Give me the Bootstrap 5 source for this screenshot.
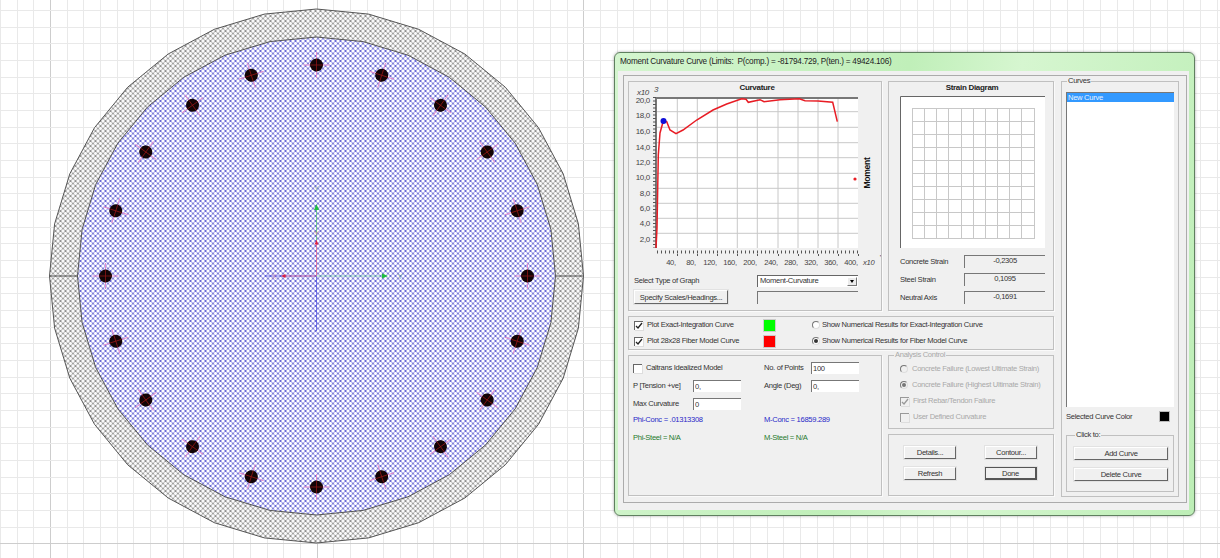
<!DOCTYPE html>
<html lang="en">
<head>
<meta charset="UTF-8">
<title>Moment Curvature Curve</title>
<link href="https://cdn.jsdelivr.net/npm/bootstrap@5.3.0/dist/css/bootstrap.min.css" rel="stylesheet">
<style>
    body { margin: 0; width: 1220px; height: 558px; overflow: hidden; background: #fff; position: relative;
        font-family: "Liberation Sans", Arial, sans-serif; font-size: 7.6px; letter-spacing: -.3px; line-height: 10px; color: #333; }
    #section { position: absolute; left: 0; top: 0; }
    svg text { font-family: "Liberation Sans", Arial, sans-serif; letter-spacing: -.3px; }
    .mc-axes { opacity: .6; }

    .mc-window { position: absolute; left: 614px; top: 52px; width: 581px; height: 464px; padding: 0 5px 5px 3px;
        border: 1px solid #5f7f5f; border-radius: 6px; box-shadow: 0 0 3px rgba(0,0,0,.35);
        background: linear-gradient(100deg, #d4f5cf 0%, #c0efb9 45%, #d6f6d0 62%, #bdeeb6 100%); }
    .mc-title { height: 18px; line-height: 18px; padding-left: 2px; font-size: 8.2px; letter-spacing: -.23px; color: #222; white-space: nowrap; }
    .mc-client { height: 439px; background: #f0f0f0; padding: 4px 2px 7px 5px; }
    .mc-frame { height: 100%; border: 1px solid #ababab; padding: 5px 5px 5px 4px; }
    .mc-left { width: 426px; }
    .mc-panel { border: 1px solid #c0c0c0; box-shadow: 1px 1px 0 #fafafa; background: #f0f0f0; }
    .mc-curv { width: 254px; height: 230px; }
    .mc-strain { width: 166px; height: 230px; }
    .mc-opts { height: 35px; padding: 0 5px; }
    .mc-model { width: 254px; height: 141px; padding: 6px 4px 0; }
    .mc-actions { height: 62px; padding: 11px 0 0 15px; }
    svg.mc-block { display: block; }

    fieldset.mc-group { border: 1px solid #c0c0c0; margin: 0; padding: 0; min-width: 0; }
    legend.mc-legend { float: none; width: auto; font-size: 7.6px; line-height: 10px; margin: 0 0 0 1px; padding: 0 1px; color: #333; }
    .mc-analysis { height: 79px; margin-top: -5px !important; padding: 1px 0 0 11px !important; color: #a8a8a8; }
    .mc-analysis legend.mc-legend { color: #a8a8a8; margin-left: -6px; }
    .mc-curves { width: 118px; height: 421px; margin-top: -5px !important; padding: 6px 4px 0 !important; }
    .mc-clickto { height: 62px; margin-top: 8px !important; padding: 7px 0 0 7px !important; }

    .mc-list { height: 315px; background: #fff; border-top: 1px solid #777; border-left: 1px solid #777; }
    .mc-list div { height: 9px; line-height: 9px; background: #3399ff; color: #e8f3ff; padding-left: 1px; }
    .mc-swatch { display: block; width: 11px; height: 11px; border: 1px solid #bbb; }

    .mc-btn { display: block; height: 13px; padding: 0; font-size: 7.6px; letter-spacing: -.3px; line-height: 11px; color: #333; background: #f0f0f0; white-space: nowrap;
        border: 1px solid; border-color: #fff #666 #666 #fff; border-radius: 0; box-shadow: 0 0 0 1px #e2e2e2; }
    .mc-btn-default { border: 1px solid #555; border-right-width: 2px; border-bottom-width: 2px; }
    .mc-btn-tall { height: 14px; }
    .mc-input { display: block; width: 48px; height: 12px; min-height: 0; padding: 0 1px; font-size: 7.6px; letter-spacing: -.3px; line-height: 10px; color: #333;
        border: 0; border-top: 1px solid #777; border-left: 1px solid #777; border-radius: 0; background: #fff; box-shadow: none; }
    .mc-readout { width: 81px; height: 13px; line-height: 10px; text-align: center; border-top: 1px solid #777; border-left: 1px solid #777; }
    .mc-empty { width: 101px; height: 13px; border-top: 1px solid #777; border-left: 1px solid #777; }
    .mc-select { width: 101px; height: 12px; line-height: 10px; padding-left: 2px; background: #fff; border-top: 1px solid #666; border-left: 1px solid #666; }
    .mc-arrow { position: absolute; right: 1px; top: 1px; width: 10px; height: 9px; background: #ececec; border: 1px solid; border-color: #fff #777 #777 #fff; }
    .mc-arrow::after { content: ""; position: absolute; left: 2px; top: 2px; border: 2.5px solid transparent; border-top: 3px solid #000; border-bottom: 0; }

    .mc-box { display: block; flex: none; width: 9px; height: 9px; background: #fff; border-top: 1px solid #666; border-left: 1px solid #666; box-shadow: 1px 1px 0 #ddd; }
    .mc-radio { display: block; flex: none; width: 8px; height: 8px; border-radius: 50%; background: #fff; border: 1px solid; border-color: #777 #ddd #ddd #777; position: relative; }
    .mc-radio.on::after { content: ""; position: absolute; left: 1px; top: 1px; width: 4px; height: 4px; border-radius: 50%; background: #333; }
    .mc-analysis .mc-box { background: #f0f0f0; border-color: #999; }
    .mc-analysis .mc-radio { background: #f0f0f0; }
    .mc-analysis .mc-radio.on::after { background: #777; }
    .mc-check-row { height: 16px; }
    .mc-plot-lab { width: 117px; margin-left: 4px; }
    .mc-color { width: 11px; height: 11px; box-shadow: 0 0 0 1px #ccc; }
    .mc-show { margin-left: 37px; margin-right: 2px; }
    .mc-lab-p { width: 60px; }
    .mc-lab-n { width: 47px; }
    .mc-cell { width: 131px; }
    .mc-phi { color: #2828c8; }
    .mc-steel { color: #1e7a2c; }
    .mc-r1 { height: 12px; margin-top: 6px; }
    .mc-r0 { height: 12px; }
    .mc-r2 { height: 10px; margin-top: 5px; }
    .mc-r3 { height: 10px; margin-top: 8px; }
    .mc-w52 { width: 52px; }
    .mc-w94 { width: 94px; }
    .mc-col29 { column-gap: 29px; row-gap: 8px; display: grid; grid-template-columns: 52px 52px; }
    .mc-below { padding: 7px 0 0 5px; }
    .mc-below-lab { width: 123px; }
    .mc-below-2 { margin-top: 3px; }
    .mc-strain-rows { padding: 6px 7px 0 11px; row-gap: 5px; }
    .mc-strain-lab { width: 64px; }
    .mc-gap5 { gap: 5px; }
    .mc-gap6 { gap: 6px; }
    .mc-gap7 { gap: 7px; }
</style>
</head>
<body>
    <!-- drawing canvas: grid + column section -->
    <svg id="section" width="1220" height="558" viewBox="0 0 1220 558">
        <defs>
            <pattern id="hatchBlue" width="5" height="5" patternUnits="userSpaceOnUse" x="0.5" y="1">
                <rect width="5" height="5" fill="#fff"/>
                <path d="M0 0L5 5M5 0L0 5" stroke="#7c7cea" stroke-width=".85"/>
                <circle cx="2.5" cy="2.5" r=".65" fill="#1c1ca8"/>
                <circle cx="0" cy="0" r=".65" fill="#1c1ca8"/><circle cx="5" cy="0" r=".65" fill="#1c1ca8"/>
                <circle cx="0" cy="5" r=".65" fill="#1c1ca8"/><circle cx="5" cy="5" r=".65" fill="#1c1ca8"/>
            </pattern>
            <pattern id="hatchGrey" width="5" height="5" patternUnits="userSpaceOnUse" x="0.5" y="1">
                <rect width="5" height="5" fill="#fafafa"/>
                <path d="M0 0L5 5M5 0L0 5" stroke="#a0a0a0" stroke-width=".9"/>
                <circle cx="2.5" cy="2.5" r=".6" fill="#444"/>
                <circle cx="0" cy="0" r=".6" fill="#444"/><circle cx="5" cy="0" r=".6" fill="#444"/>
                <circle cx="0" cy="5" r=".6" fill="#444"/><circle cx="5" cy="5" r=".6" fill="#444"/>
            </pattern>
        </defs>
        <g id="gridLines"></g>
        <polygon id="outerPoly" fill="url(#hatchGrey)" stroke="#555" stroke-width="1"/>
        <polygon id="innerPoly" fill="url(#hatchBlue)" stroke="#555" stroke-width="1"/>
        <path d="M50 276H78M555 276H583" stroke="#555"/>
        <g id="bars"></g>
        <g class="mc-axes">
            <path d="M316.5 276V331M316.5 276H265" stroke="#3030e0"/>
            <path d="M316.5 276V240M316.5 276H283" stroke="#e84070"/>
            <path d="M316.5 240V205" stroke="#30c050"/>
            <path d="M316.5 276H386" stroke="#60d090"/>
            <text x="316.5" y="191" font-size="8" text-anchor="middle" fill="#60a080">Y</text>
            <text x="316.5" y="236" font-size="8" text-anchor="middle" fill="#c06060">Y</text>
            <text x="400" y="279" font-size="8" text-anchor="middle" fill="#50a070">Y</text>
            <text x="274" y="279" font-size="8" text-anchor="middle" fill="#c070a0">X</text>
        </g>
        <path d="M316.5 204l-2.500 6h5z" fill="#20c040"/>
        <path d="M316.5 240l-2 4.500h4z" fill="#e02040"/>
        <path d="M388 276l-6-2.500v5z" fill="#20c040"/>
        <path d="M281 276l4.500-2v4z" fill="#e02040"/>
    </svg>

    <div class="mc-window">
        <div class="mc-title">Moment Curvature Curve (Limits:&nbsp; P(comp.) = -81794.729, P(ten.) = 49424.106)</div>
        <div class="mc-client">
            <div class="mc-frame d-flex mc-gap7">
                <div class="mc-left d-flex flex-column mc-gap5">
                    <div class="d-flex mc-gap6">
                        <!-- curvature chart -->
                        <div class="mc-panel mc-curv">
                            <svg class="mc-block" width="252" height="186" viewBox="629 82 252 186">
                                <rect x="656" y="97" width="202" height="151" fill="#fff"/>
                                <text x="757" y="90" font-size="8" font-weight="bold" text-anchor="middle" fill="#222">Curvature</text>
                                <text x="637" y="95" font-size="8" font-style="italic" fill="#444">x10</text>
                                <text x="656" y="92" font-size="8" font-style="italic" text-anchor="middle" fill="#444">3</text>
                                <path d="M656 111.700H858M656 127.300H858M656 142.700H858M656 157.700H858M656 173.300H858M656 188.300H858M656 203.300H858M656 218.300H858M656 233.300H858" stroke="#c8c8c8"/>
                                <path d="M677.300 97V248M697.300 97V248M717.300 97V248M737.300 97V248M757.300 97V248M778 97V248M798 97V248M818 97V248M838 97V248" stroke="#c8c8c8"/>
                                <path d="M656 98H858M656 97V248" stroke="#777" stroke-width="2"/>
                                <path d="M654.500 97V248" stroke="#555" stroke-width="3" stroke-dasharray="1 2.500"/>
                                <path d="M657 252H858" stroke="#555" stroke-width="3" stroke-dasharray="1 3"/>
                                <path d="M677.500 254v2M697.500 254v2M717.500 254v2M737.500 254v2M757.500 254v2M778.500 254v2M798.500 254v2M818.500 254v2M838.500 254v2M858.500 254v2" stroke="#555"/>
                                <g font-size="8" fill="#444" text-anchor="end">
                                    <text x="650" y="103">20,0</text><text x="650" y="118">18,0</text><text x="650" y="134">16,0</text>
                                    <text x="650" y="150">14,0</text><text x="650" y="165">12,0</text><text x="650" y="180">10,0</text>
                                    <text x="650" y="196">8,0</text><text x="650" y="211">6,0</text><text x="650" y="226">4,0</text><text x="650" y="242">2,0</text>
                                </g>
                                <g font-size="7.600" fill="#444" text-anchor="middle">
                                    <text x="671" y="265">40,</text><text x="691" y="265">80,</text><text x="710" y="265">120,</text>
                                    <text x="730" y="265">160,</text><text x="750" y="265">200,</text><text x="771" y="265">240,</text>
                                    <text x="791" y="265">280,</text><text x="811" y="265">320,</text><text x="831" y="265">360,</text><text x="851" y="265">400,</text>
                                </g>
                                <text x="863" y="265" font-size="7.600" font-style="italic" fill="#444">x10</text>
                                <text x="881" y="260" font-size="8" text-anchor="end" fill="#444">'</text>
                                <text transform="translate(870 173) rotate(-90)" font-size="8.600" font-weight="bold" text-anchor="middle" fill="#111">Moment</text>
                                <polyline fill="none" stroke="#e81c24" stroke-width="1.500" points="656,248 657,228 658.300,155 660,133 663.300,121 666.700,121.700 670,130 676,133.700 683,130 696.700,120 713,110 726.700,104 741.700,98.700 746,99.300 748.300,102.300 760,99.700 764,101.700 780,99.700 799.300,98.700 805,100.700 818,101 832.700,102.300 837.300,121.700"/>
                                <circle cx="663.500" cy="121" r="3" fill="#1010d8"/>
                                <circle cx="855" cy="179" r="1.600" fill="#e81c24"/>
                            </svg>
                            <div class="mc-below">
                                <div class="d-flex align-items-center mc-r0">
                                    <div class="mc-below-lab">Select Type of Graph</div>
                                    <div class="mc-select position-relative">Moment-Curvature<span class="mc-arrow"></span></div>
                                </div>
                                <div class="d-flex align-items-center mc-below-2">
                                    <div class="mc-below-lab"><button type="button" class="btn mc-btn mc-btn-tall mc-w94">Specify Scales/Headings...</button></div>
                                    <div class="mc-empty"></div>
                                </div>
                            </div>
                        </div>
                        <!-- strain diagram -->
                        <div class="mc-panel mc-strain">
                            <svg class="mc-block" width="164" height="167" viewBox="889 82 164 167">
                                <text x="972" y="90" font-size="8" font-weight="bold" text-anchor="middle" fill="#222">Strain Diagram</text>
                                <rect x="900" y="96" width="145" height="152" fill="#fff"/>
                                <path d="M900.500 248V96.500H1045" fill="none" stroke="#666"/>
                                <path d="M912 108.500H1034M912 121.500H1034M912 134.500H1034M912 147.500H1034M912 160.500H1034M912 173.500H1034M912 186.500H1034M912 199.500H1034M912 212.500H1034M912 225.500H1034M912 238.500H1034" stroke="#c8c8c8"/>
                                <path d="M912.500 108V239M924.500 108V239M936.500 108V239M948.500 108V239M961.500 108V239M973.500 108V239M985.500 108V239M997.500 108V239M1009.500 108V239M1021.500 108V239M1034.500 108V239" stroke="#c8c8c8"/>
                            </svg>
                            <div class="mc-strain-rows d-flex flex-column">
                                <div class="d-flex align-items-center"><div class="mc-strain-lab">Concrete Strain</div><div class="mc-readout">-0,2305</div></div>
                                <div class="d-flex align-items-center"><div class="mc-strain-lab">Steel Strain</div><div class="mc-readout">0,1095</div></div>
                                <div class="d-flex align-items-center"><div class="mc-strain-lab">Neutral Axis</div><div class="mc-readout">-0,1691</div></div>
                            </div>
                        </div>
                    </div>

                    <!-- plot options -->
                    <div class="mc-panel mc-opts d-flex flex-column justify-content-center">
                        <div class="d-flex align-items-center mc-check-row">
                            <span class="mc-box"><svg width="8" height="8" viewBox="0 0 8 8" class="mc-block"><path d="M1 4l2 2 4-5" fill="none" stroke="#222" stroke-width="1.300"/></svg></span>
                            <span class="mc-plot-lab">Plot Exact-Integration Curve</span>
                            <span class="mc-color" style="background:#00ff00"></span>
                            <span class="mc-radio mc-show"></span>
                            <span>Show Numerical Results for Exact-Integration Curve</span>
                        </div>
                        <div class="d-flex align-items-center mc-check-row">
                            <span class="mc-box"><svg width="8" height="8" viewBox="0 0 8 8" class="mc-block"><path d="M1 4l2 2 4-5" fill="none" stroke="#222" stroke-width="1.300"/></svg></span>
                            <span class="mc-plot-lab">Plot 28x28 Fiber Model Curve</span>
                            <span class="mc-color" style="background:#ff0000"></span>
                            <span class="mc-radio mc-show on"></span>
                            <span>Show Numerical Results for Fiber Model Curve</span>
                        </div>
                    </div>

                    <div class="d-flex mc-gap6">
                        <!-- model inputs -->
                        <div class="mc-panel mc-model">
                            <div class="d-flex mc-r0">
                                <div class="mc-cell d-flex align-items-center"><span class="mc-box"></span><span class="ms-1">Caltrans Idealized Model</span></div>
                                <div class="d-flex align-items-center"><span class="mc-lab-n">No. of Points</span><input class="form-control mc-input" value="100"></div>
                            </div>
                            <div class="d-flex mc-r1">
                                <div class="mc-cell d-flex align-items-center"><span class="mc-lab-p">P [Tension +ve]</span><input class="form-control mc-input" value="0,"></div>
                                <div class="d-flex align-items-center"><span class="mc-lab-n">Angle (Deg)</span><input class="form-control mc-input" value="0,"></div>
                            </div>
                            <div class="d-flex mc-r1">
                                <div class="mc-cell d-flex align-items-center"><span class="mc-lab-p">Max Curvature</span><input class="form-control mc-input" value="0"></div>
                            </div>
                            <div class="d-flex mc-r2 mc-phi"><div class="mc-cell">Phi-Conc = .01313308</div><div>M-Conc = 16859.289</div></div>
                            <div class="d-flex mc-r3 mc-steel"><div class="mc-cell">Phi-Steel = N/A</div><div>M-Steel = N/A</div></div>
                        </div>
                        <div class="d-flex flex-column mc-strain mc-gap5">
                            <fieldset class="mc-group mc-analysis">
                                <legend class="mc-legend">Analysis Control</legend>
                                <div class="d-flex align-items-center mc-check-row"><span class="mc-radio"></span><span class="ms-1">Concrete Failure (Lowest Ultimate Strain)</span></div>
                                <div class="d-flex align-items-center mc-check-row"><span class="mc-radio on"></span><span class="ms-1">Concrete Failure (Highest Ultimate Strain)</span></div>
                                <div class="d-flex align-items-center mc-check-row"><span class="mc-box"><svg width="8" height="8" viewBox="0 0 8 8" class="mc-block"><path d="M1 4l2 2 4-5" fill="none" stroke="#999" stroke-width="1.300"/></svg></span><span class="ms-1">First Rebar/Tendon Failure</span></div>
                                <div class="d-flex align-items-center mc-check-row"><span class="mc-box"></span><span class="ms-1">User Defined Curvature</span></div>
                            </fieldset>
                            <div class="mc-panel mc-actions">
                                <div class="mc-col29">
                                    <button type="button" class="btn mc-btn mc-w52">Details...</button>
                                    <button type="button" class="btn mc-btn mc-w52">Contour...</button>
                                    <button type="button" class="btn mc-btn mc-w52">Refresh</button>
                                    <button type="button" class="btn mc-btn mc-btn-default mc-w52">Done</button>
                                </div>
                            </div>
                        </div>
                    </div>
                </div>

                <!-- curves list -->
                <fieldset class="mc-group mc-curves">
                    <legend class="mc-legend">Curves</legend>
                    <div class="mc-list"><div>New Curve</div></div>
                    <div class="d-flex align-items-center justify-content-between pe-1 mt-1">
                        <span>Selected Curve Color</span>
                        <span class="mc-swatch" style="background:#000"></span>
                    </div>
                    <fieldset class="mc-group mc-clickto">
                        <legend class="mc-legend">Click to:</legend>
                        <button type="button" class="btn mc-btn mc-w94 mb-2">Add Curve</button>
                        <button type="button" class="btn mc-btn mc-w94">Delete Curve</button>
                    </fieldset>
                </fieldset>
            </div>
        </div>
    </div>

    <script>
        // grid behind the section
        var cx = 316.5, cy = 276;
        var g = '';
        for (var i = 0; i < 74; i++) {
            var x = Math.round(i * 16.667) + 0.5;
            var dark = (i == 3 || i == 19 || i == 35);
            g += '<path d="M' + x + ' 0V558" stroke="' + (dark ? '#cdcdcd' : '#e9e9e9') + '"/>';
        }
        for (var j = 0; j < 34; j++) {
            var y = Math.round(10 + j * 16.667) + 0.5;
            var darkY = (j == 32);
            g += '<path d="M0 ' + y + 'H1220" stroke="' + (darkY ? '#cdcdcd' : '#e9e9e9') + '"/>';
        }
        document.getElementById('gridLines').innerHTML = g;

        // section outline, 32 sided polygons
        function poly(r) {
            var p = [];
            for (var k = 0; k < 32; k++) {
                var a = k * Math.PI / 16;
                p.push((cx + r * Math.cos(a)).toFixed(1) + ',' + (cy + r * Math.sin(a)).toFixed(1));
            }
            return p.join(' ');
        }
        document.getElementById('outerPoly').setAttribute('points', poly(267));
        document.getElementById('innerPoly').setAttribute('points', poly(239));

        // 20 rebars
        var b = '';
        for (var n = 0; n < 20; n++) {
            var deg = n * 18;
            var bx = cx + 211 * Math.cos(deg * Math.PI / 180);
            var by = cy + 211 * Math.sin(deg * Math.PI / 180);
            b += '<g transform="translate(' + bx.toFixed(1) + ' ' + by.toFixed(1) + ') rotate(' + deg + ')">' +
                '<path d="M-13 0H13M0 -13V13" stroke="#e68ccc" stroke-width="1"/>' +
                '<circle r="6.5" fill="#120406"/>' +
                '<path d="M-6 0H6M0 -6V6" stroke="#8c1414" stroke-width=".8"/></g>';
        }
        document.getElementById('bars').innerHTML = b;
    </script>
    <script src="https://cdn.jsdelivr.net/npm/bootstrap@5.3.0/dist/js/bootstrap.bundle.min.js"></script>
</body>
</html>
